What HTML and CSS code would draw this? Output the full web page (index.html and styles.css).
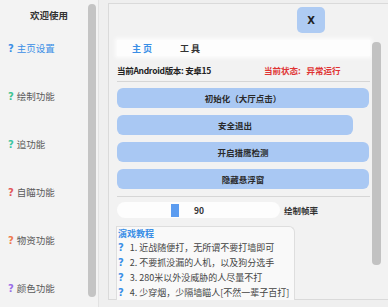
FILE: index.html
```html
<!DOCTYPE html>
<html lang="zh">
<head>
    <meta charset="utf-8" />
    <title>菜单</title>
    <link rel="stylesheet" href="styles.css">
</head>
<body>
    <div id="sidebar">
        <div class="side-list">
            <div class="side-title">欢迎使用</div>
            <div class="side-item active"><span class="mark blue">?</span>主页设置</div>
            <div class="side-item"><span class="mark green">?</span>绘制功能</div>
            <div class="side-item"><span class="mark teal">?</span>追功能</div>
            <div class="side-item"><span class="mark red">?</span>自瞄功能</div>
            <div class="side-item"><span class="mark orange">?</span>物资功能</div>
            <div class="side-item"><span class="mark purple">?</span>颜色功能</div>
        </div>
        <div class="side-scroll"></div>
    </div>

    <div id="main">
        <div class="topbar">
            <button class="close-button">X</button>
        </div>
        <div class="main-row">
            <div class="content">
                <div class="tabs">
                    <span class="tab active">主 页</span>
                    <span class="tab">工 具</span>
                </div>
                <div class="status-row">
                    <span class="version">当前Android版本: 安卓15</span>
                    <span class="status">当前状态:&nbsp;&nbsp;&nbsp;异常运行</span>
                </div>
                <div class="action-list">
                    <button class="action-button">初始化（大厅点击）</button>
                    <button class="action-button short">安全退出</button>
                    <button class="action-button">开启猎鹰检测</button>
                    <button class="action-button">隐藏悬浮窗</button>
                </div>
                <div class="slider-row">
                    <div class="slider">
                        <span class="thumb"></span>
                        <span class="value">90</span>
                    </div>
                    <span class="slider-label">绘制帧率</span>
                </div>
                <div class="guide">
                    <div class="guide-title">演戏教程</div>
                    <div class="guide-item"><span class="mark blue">?</span>1. 近战随便打，无所谓不要打墙即可</div>
                    <div class="guide-item"><span class="mark blue">?</span>2. 不要抓没漏的人机，以及狗分选手</div>
                    <div class="guide-item"><span class="mark blue">?</span>3. 280米以外没威胁的人尽量不打</div>
                    <div class="guide-item"><span class="mark blue">?</span>4. 少穿烟，少隔墙瞄人[不然一辈子百打]</div>
                </div>
            </div>
            <div class="main-scroll"></div>
        </div>
    </div>
</body>
</html>
```

FILE: styles.css
```css
body {
    margin: 0;
    width: 388px;
    height: 307px;
    overflow: hidden;
    display: flex;
    background: #efefef;
    font-family: "Noto Sans CJK SC", "DejaVu Sans", sans-serif;
    font-size: 9.5px;
    color: #555;
}

#sidebar {
    width: 99px;
    height: 307px;
    box-sizing: border-box;
    display: flex;
    background: #f3f3f3;
    border-right: 1px solid #e2e2e2;
}

.side-list {
    width: 88px;
}

.side-title {
    height: 24px;
    padding-top: 9px;
    box-sizing: border-box;
    padding-left: 10px;
    text-align: center;
    line-height: 13px;
    font-weight: bold;
    color: #333;
}

.side-item {
    height: 48px;
    display: flex;
    align-items: center;
    padding-left: 8px;
    color: #5a5a5a;
}

    .side-item.active {
        color: #3a8ee6;
    }

.mark {
    font-family: "DejaVu Sans", sans-serif;
    font-weight: bold;
    font-size: 10px;
    margin-right: 3px;
}

.blue { color: #3a8ee6; }
.green { color: #3fc390; }
.teal { color: #3cc6a0; }
.red { color: #e2575a; }
.orange { color: #ee7a4e; }
.purple { color: #9a6de8; }

.side-scroll {
    width: 8px;
    height: 293px;
    margin-top: 4px;
    border-radius: 4px;
    background: #c4c4c4;
}

#main {
    flex: 1;
    margin-left: 9px;
    margin-top: 3px;
    height: 297px;
    box-sizing: border-box;
    border-top: 1px solid #dadada;
    border-left: 1px solid #dadada;
    border-bottom: 1px solid #dadada;
    background: #f2f2f2;
    display: flex;
    flex-direction: column;
    font-size: 8.5px;
}

.topbar {
    height: 29px;
}

.close-button {
    margin-top: 3px;
    margin-left: 188px;
    width: 28px;
    height: 26px;
    border: none;
    border-radius: 5px;
    background: #aecbf3;
    font-family: "DejaVu Sans", sans-serif;
    font-weight: bold;
    font-size: 10px;
    color: #222;
    padding: 0;
}

.main-row {
    display: flex;
    flex: 1;
}

.content {
    width: 253px;
    margin-left: 8px;
}

.main-scroll {
    width: 9px;
    height: 223px;
    margin-top: 9px;
    margin-left: 2px;
    border-radius: 4px;
    background: #c2c2c2;
}

.tabs {
    margin-top: 7px;
    height: 16px;
    display: flex;
    align-items: center;
    background: rgba(255, 255, 255, 0.85);
    box-shadow: 0 0 4px 2px rgba(255, 255, 255, 0.8);
    font-size: 9px;
    font-weight: bold;
    color: #333;
}

.tab {
    width: 48px;
}

    .tab:first-child {
        margin-left: 15px;
    }

    .tab.active {
        color: #3a8ee6;
    }

.status-row {
    margin-top: 6px;
    height: 16px;
    display: flex;
    align-items: center;
    padding-bottom: 3px;
    border-bottom: 1px solid #d6d6d6;
    font-weight: bold;
}

.version {
    color: #222;
    letter-spacing: -0.3px;
}

.status {
    margin-left: 53px;
    color: #e03434;
}

.action-list {
    display: flex;
    flex-direction: column;
    gap: 7px;
    padding-top: 6px;
    padding-bottom: 7px;
    border-bottom: 1px solid #d6d6d6;
}

.action-button {
    height: 20px;
    width: 252px;
    border: none;
    border-radius: 6px;
    background: #a9c8f3;
    font-family: "Noto Sans CJK SC", sans-serif;
    font-size: 8.5px;
    font-weight: bold;
    color: #2a2a2a;
    padding: 0;
}

    .action-button.short {
        width: 236px;
    }

.slider-row {
    margin-top: 5px;
    height: 16px;
    display: flex;
    align-items: center;
}

.slider {
    width: 163px;
    height: 16px;
    border-radius: 8px;
    background: #fdfdfd;
    display: flex;
    align-items: center;
}

.thumb {
    width: 8px;
    height: 13px;
    margin-left: 54px;
    background: #5b9cf0;
}

.value {
    margin-left: 15px;
    font-weight: bold;
    color: #333;
}

.slider-label {
    margin-left: 4px;
    font-weight: bold;
    color: #333;
}

.guide {
    margin-top: 8px;
    margin-left: -1px;
    width: 179px;
    height: 74px;
    box-sizing: border-box;
    padding-left: 1px;
    background: #f9f9f9;
    border: 1px solid #dedede;
    border-bottom: none;
    border-radius: 0 6px 0 0;
}

.guide-title {
    height: 13px;
    line-height: 13px;
    font-size: 9px;
    font-weight: bold;
    color: #3a8ee6;
}

.guide-item {
    height: 15px;
    display: flex;
    align-items: center;
    white-space: nowrap;
    font-size: 9px;
    color: #444;
}

    .guide-item .mark {
        margin-right: 6px;
    }
```
